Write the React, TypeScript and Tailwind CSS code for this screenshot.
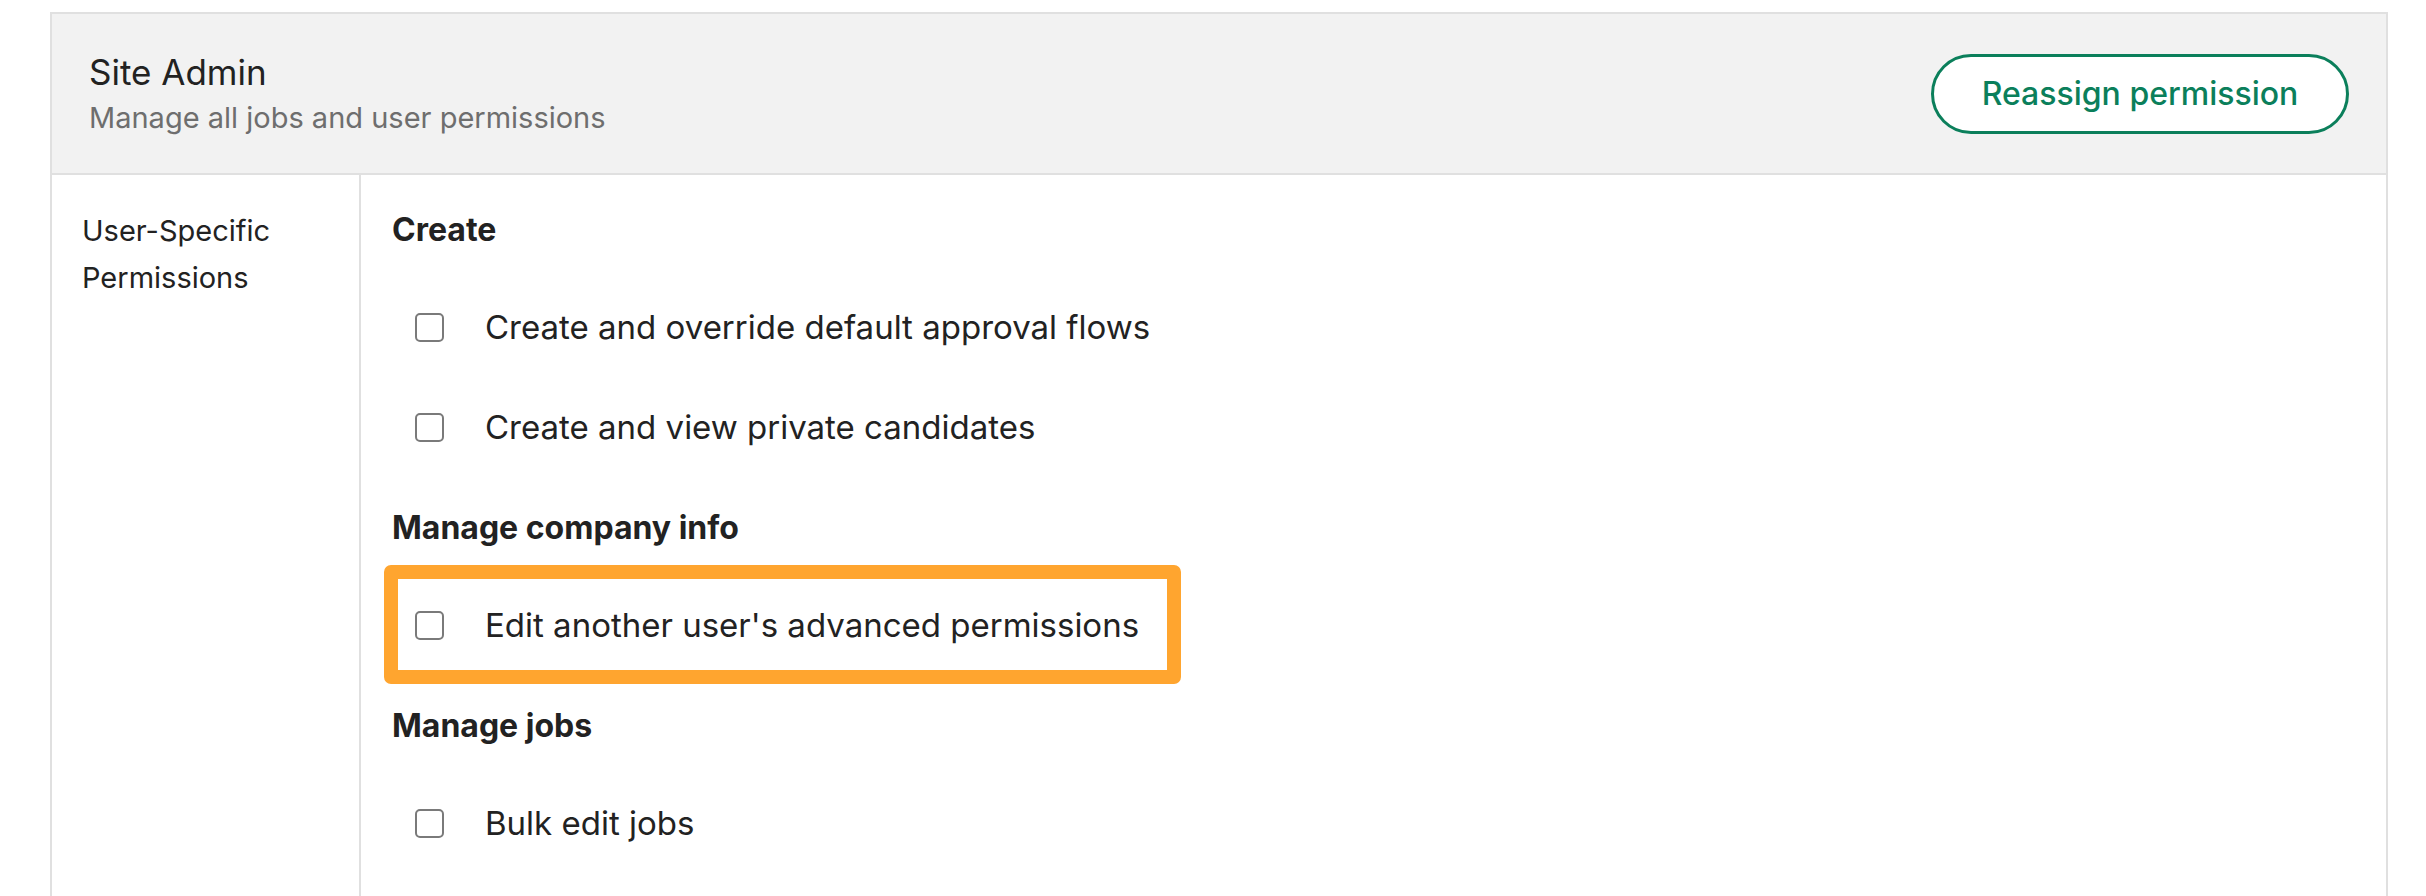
import React from 'react'

const font = { fontFamily: 'Inter, "Noto Sans", sans-serif' }

function Checkbox() {
  return <div className="w-[29px] h-[29px] shrink-0 rounded-[5px] border-[2.5px] border-[#7a7a7a] bg-white" />
}

function Row({ label, highlight }: { label: string; highlight?: boolean }) {
  return (
    <div className="relative flex h-[100px] items-center pl-[23px]">
      {highlight && (
        <div className="absolute left-[-8px] top-[-10px] h-[119px] w-[797px] rounded-[7px] border-[14px] border-[#ffa52f]" />
      )}
      <Checkbox />
      <span className="ml-[41px] text-[33px] leading-[40px] text-[#222222]">{label}</span>
    </div>
  )
}

function Heading({ children, first }: { children: React.ReactNode; first?: boolean }) {
  return (
    <h3 className={`${first ? '' : 'mt-[31px]'} mb-[27px] text-[32px] font-bold leading-[40px] text-[#222222]`}>
      {children}
    </h3>
  )
}

export default function App() {
  return (
    <div className="min-h-[896px] bg-white pl-[50px] pt-[12px] pr-[38px]" style={font}>
      <div className="border-2 border-[#e0e0e0]">
        {/* header */}
        <div className="flex h-[159px] items-center justify-between bg-[#f2f2f2] pl-[37px] pr-[37px]">
          <div>
            <div className="text-[35px] leading-[44px] text-[#222222]">Site Admin</div>
            <div className="mt-[4px] text-[29px] leading-[40px] text-[#6e6e6e]">Manage all jobs and user permissions</div>
          </div>
          <button className="h-[80px] w-[418px] rounded-full border-[3px] border-[#0b7f5b] bg-white text-[32px] font-medium text-[#0b7f5b]">
            Reassign permission
          </button>
        </div>
        <div className="flex border-t-2 border-[#e0e0e0]">
          <div className="w-[309px] shrink-0 border-r-2 border-[#e0e0e0] pl-[30px] pt-[32px] text-[29px] leading-[47px] text-[#222222]">
            User-Specific
            <br />
            Permissions
          </div>
          <div className="flex-1 pl-[31px] pt-[35px] pb-[80px]">
            <Heading first>Create</Heading>
            <Row label="Create and override default approval flows" />
            <Row label="Create and view private candidates" />
            <Heading>Manage company info</Heading>
            <Row label="Edit another user's advanced permissions" highlight />
            <Heading>Manage jobs</Heading>
            <Row label="Bulk edit jobs" />
          </div>
        </div>
      </div>
    </div>
  )
}
